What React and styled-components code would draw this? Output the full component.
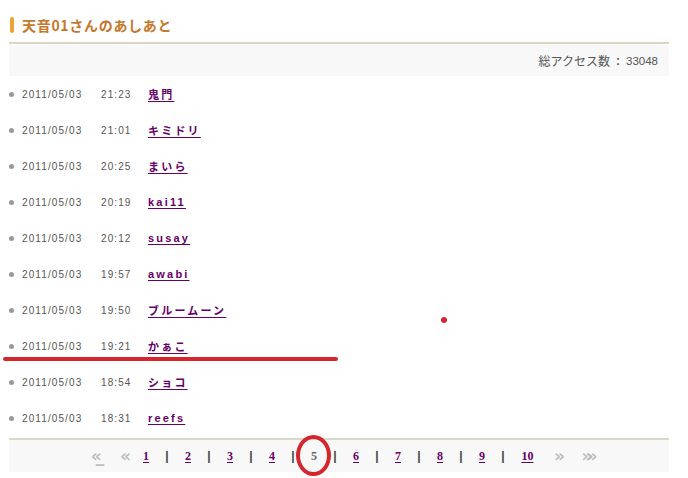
import React from "react";
import styled, { createGlobalStyle } from "styled-components";

const Global = createGlobalStyle`
  html, body { margin: 0; padding: 0; background: #fff; }
  body { font-family: "Liberation Sans", "Noto Sans CJK JP", sans-serif; }
`;

const Page = styled.div`
  position: relative;
  width: 688px;
  height: 478px;
  overflow: hidden;
  background: #fff;
`;

const Content = styled.div`
  margin-left: 9px;
  width: 660px;
  padding-top: 16px;
`;

const Header = styled.div`
  display: flex;
  align-items: center;
  gap: 8px;
  height: 18px;
  padding-left: 1px;
  padding-bottom: 8px;
  border-bottom: 2px solid #ddd4c4;
`;

const Bar = styled.span`
  width: 4px;
  height: 16px;
  border-radius: 2px;
  background: #f0a232;
`;

const Title = styled.h1`
  margin: 0;
  font-family: "Noto Sans CJK JP", sans-serif;
  font-size: 14px;
  font-weight: 700;
  color: #c4782c;
  letter-spacing: 0.7px;
  line-height: 18px;
`;

const Total = styled.div`
  display: flex;
  justify-content: flex-end;
  align-items: center;
  gap: 6px;
  height: 31px;
  margin-top: 1px;
  padding-right: 11px;
  background: #f8f8f8;
  font-family: "Noto Sans CJK JP", sans-serif;
  font-size: 12px;
  color: #555;
`;

const Num = styled.span`
  font-family: "Liberation Sans", sans-serif;
  font-size: 11.5px;
`;

const Colon = styled.span`
  font-family: "Liberation Sans", sans-serif;
  font-weight: 700;
  font-size: 12px;
`;

const List = styled.ul`
  list-style: none;
  margin: 0;
  padding: 0;
`;

const Row = styled.li`
  display: flex;
  align-items: center;
  height: 36px;
`;

const Dot = styled.span`
  width: 5px;
  height: 5px;
  border-radius: 50%;
  background: #9a9a9a;
  margin-right: 8px;
`;

const Stamp = styled.span`
  font-family: "Liberation Sans", sans-serif;
  font-size: 10px;
  letter-spacing: 1.1px;
  color: #555;
  width: ${(p) => p.$w}px;
`;

const Name = styled.a`
  font-family: "Liberation Sans", "Noto Sans CJK JP", sans-serif;
  font-size: 11px;
  font-weight: 700;
  letter-spacing: 2.2px;
  color: #660066;
  text-decoration: underline;
  text-underline-offset: 2px;
  text-decoration-thickness: 1px;
`;

const PagerLine = styled.div`
  margin-top: 2px;
  border-top: 2px solid #dcd8c8;
`;

const Pager = styled.div`
  display: flex;
  justify-content: center;
  align-items: center;
  height: 32px;
  background: #f8f8f8;
  padding-left: 3px;
  font-family: "Liberation Serif", serif;
  font-size: 12px;
  font-weight: 700;
`;

const PItem = styled.span`
  display: inline-flex;
  justify-content: center;
  width: ${(p) => p.$w || 21}px;
  color: ${(p) => (p.$current ? "#666" : "#660066")};
  text-decoration: ${(p) => (p.$link ? "underline" : "none")};
  text-underline-offset: 2px;
`;

const Arrow = styled.span`
  display: inline-flex;
  justify-content: center;
  align-items: center;
  width: ${(p) => p.$w}px;
  color: #bdbdbd;
  font-family: "DejaVu Sans", sans-serif;
  font-size: 17px;
  line-height: 16px;
  font-weight: 700;
  letter-spacing: -6px;
`;

const Sep = styled.span`
  width: 21px;
  display: inline-flex;
  justify-content: center;
  color: #444;
  font-family: "Liberation Sans", sans-serif;
  font-weight: 700;
`;

const RedLine = styled.div`
  position: absolute;
  left: 3px;
  top: 357px;
  width: 335px;
  height: 4px;
  border-radius: 2px;
  background: #d4262c;
`;

const RedDot = styled.div`
  position: absolute;
  left: 441px;
  top: 317px;
  width: 6px;
  height: 6px;
  border-radius: 50%;
  background: #d4262c;
`;

const RedRing = styled.div`
  position: absolute;
  left: 296px;
  top: 435px;
  width: 27px;
  height: 33px;
  border: 4px solid #d4262c;
  border-radius: 50%;
`;

const rows = [
  ["21:23", "鬼門"],
  ["21:01", "キミドリ"],
  ["20:25", "まいら"],
  ["20:19", "kai11"],
  ["20:12", "susay"],
  ["19:57", "awabi"],
  ["19:50", "ブルームーン"],
  ["19:21", "かぁこ"],
  ["18:54", "ショコ"],
  ["18:31", "reefs"],
];

export default function App() {
  const pages = [1, 2, 3, 4, 5, 6, 7, 8, 9, 10];
  return (
    <Page>
      <Global />
      <Content>
        <Header>
          <Bar />
          <Title>天音01さんのあしあと</Title>
        </Header>
        <Total>
          <span>総アクセス数</span>
          <Colon>:</Colon>
          <Num>33048</Num>
        </Total>
        <List>
          {rows.map(([t, n], i) => (
            <Row key={i}>
              <Dot />
              <Stamp $w={79}>2011/05/03</Stamp>
              <Stamp $w={47}>{t}</Stamp>
              <Name href="#">{n}</Name>
            </Row>
          ))}
        </List>
        <PagerLine />
        <Pager>
          <Arrow $w={30}>«_</Arrow>
          <Arrow $w={26}>«</Arrow>
          {pages.map((p, i) => (
            <React.Fragment key={p}>
              {i > 0 && <Sep>|</Sep>}
              <PItem $link={p !== 5} $current={p === 5} $w={p === 10 ? 28 : 21}>
                {p}
              </PItem>
            </React.Fragment>
          ))}
          <Arrow $w={30}>»</Arrow>
          <Arrow $w={30}>»»</Arrow>
        </Pager>
      </Content>
      <RedLine />
      <RedDot />
      <RedRing />
    </Page>
  );
}
